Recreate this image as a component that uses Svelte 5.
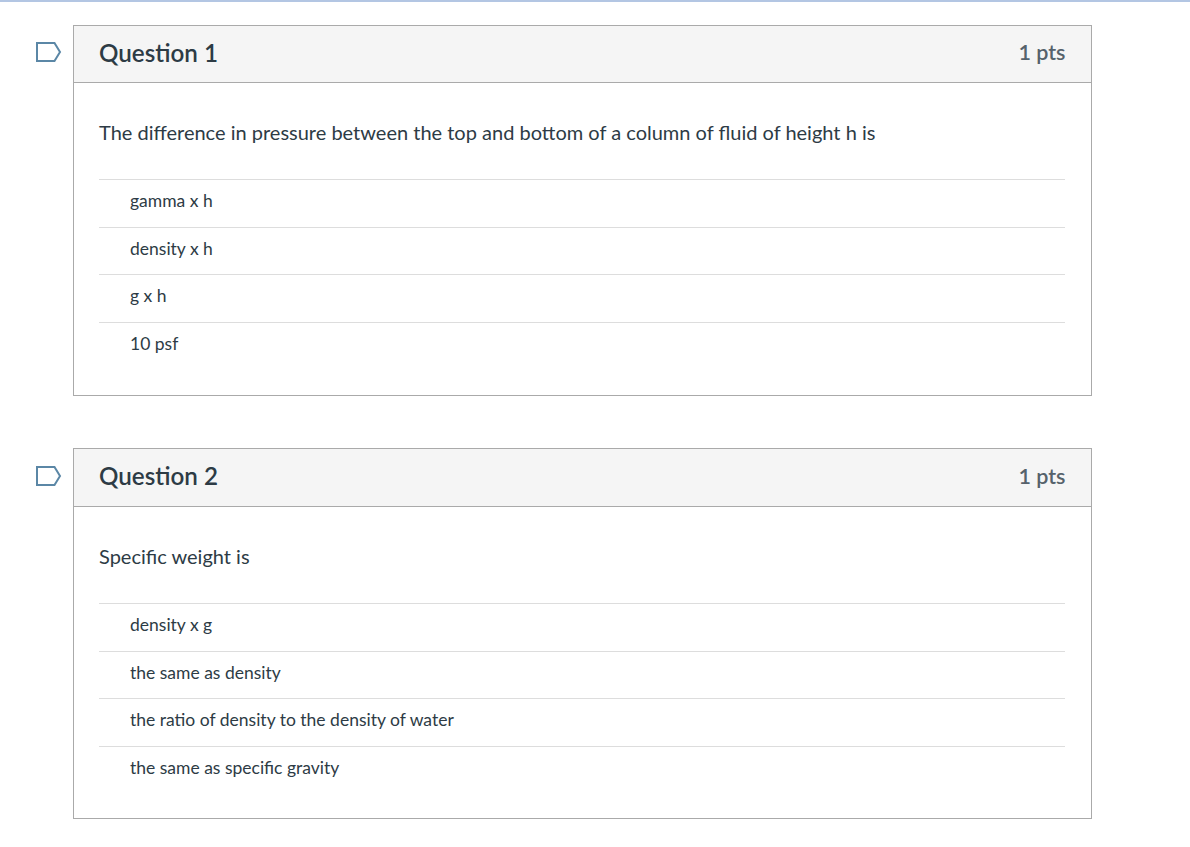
<script>
	const questions = [
		{
			title: 'Question 1',
			points: '1 pts',
			text: 'The difference in pressure between the top and bottom of a column of fluid of height h is',
			answers: ['gamma x h', 'density x h', 'g x h', '10 psf']
		},
		{
			title: 'Question 2',
			points: '1 pts',
			text: 'Specific weight is',
			answers: ['density x g', 'the same as density', 'the ratio of density to the density of water', 'the same as specific gravity']
		}
	];
</script>

<main class="quiz">
	{#each questions as q}
		<section class="question">
			<svg class="flag" width="26" height="20" viewBox="0 0 26 20" aria-hidden="true">
				<path d="M1 1H18.5L24 10L18.5 19H1Z" fill="#fff" stroke="#5b87a6" stroke-width="2" />
			</svg>
			<div class="card">
				<header class="card-header">
					<h2>{q.title}</h2>
					<span class="pts">{q.points}</span>
				</header>
				<div class="card-body">
					<p class="text">{q.text}</p>
					<ul class="answers">
						{#each q.answers as a}
							<li>{a}</li>
						{/each}
					</ul>
				</div>
			</div>
		</section>
	{/each}
</main>

<style>
	:global(body) {
		background: #fff;
		font-family: Lato, "Liberation Sans", sans-serif;
		color: #2d3b45;
	}

	.quiz {
		border-top: 2px solid #b3c6e3;
		padding: 22.6px 98px 0 73px;
		display: flex;
		flex-direction: column;
		gap: 52.8px;
	}

	.question {
		position: relative;
	}

	.flag {
		position: absolute;
		left: -37px;
		top: 17.4px;
	}

	.card {
		border: 1px solid #aaa;
	}

	.card-header {
		display: flex;
		justify-content: space-between;
		align-items: center;
		box-sizing: border-box;
		height: 57.7px;
		padding: 0 25.5px 3.6px 25px;
		background: #f5f5f5;
		border-bottom: 1px solid #aaa;
	}

	h2 {
		margin: 0;
		font-size: 24.2px;
		font-weight: 600;
		color: #2d3b45;
	}

	.pts {
		font-size: 21.5px;
		font-weight: 600;
		color: #56626b;
	}

	.card-body {
		padding: 34px 26px 25.3px 25px;
	}

	.text {
		margin: 0 0 32px;
		font-size: 20px;
		line-height: 30px;
	}

	.answers {
		list-style: none;
		margin: 0;
		padding: 0;
	}

	.answers li {
		border-top: 1px solid #ddd;
		padding: 0 0 0 31px;
		height: 46.5px;
		line-height: 41px;
		font-size: 17.5px;
	}
</style>
